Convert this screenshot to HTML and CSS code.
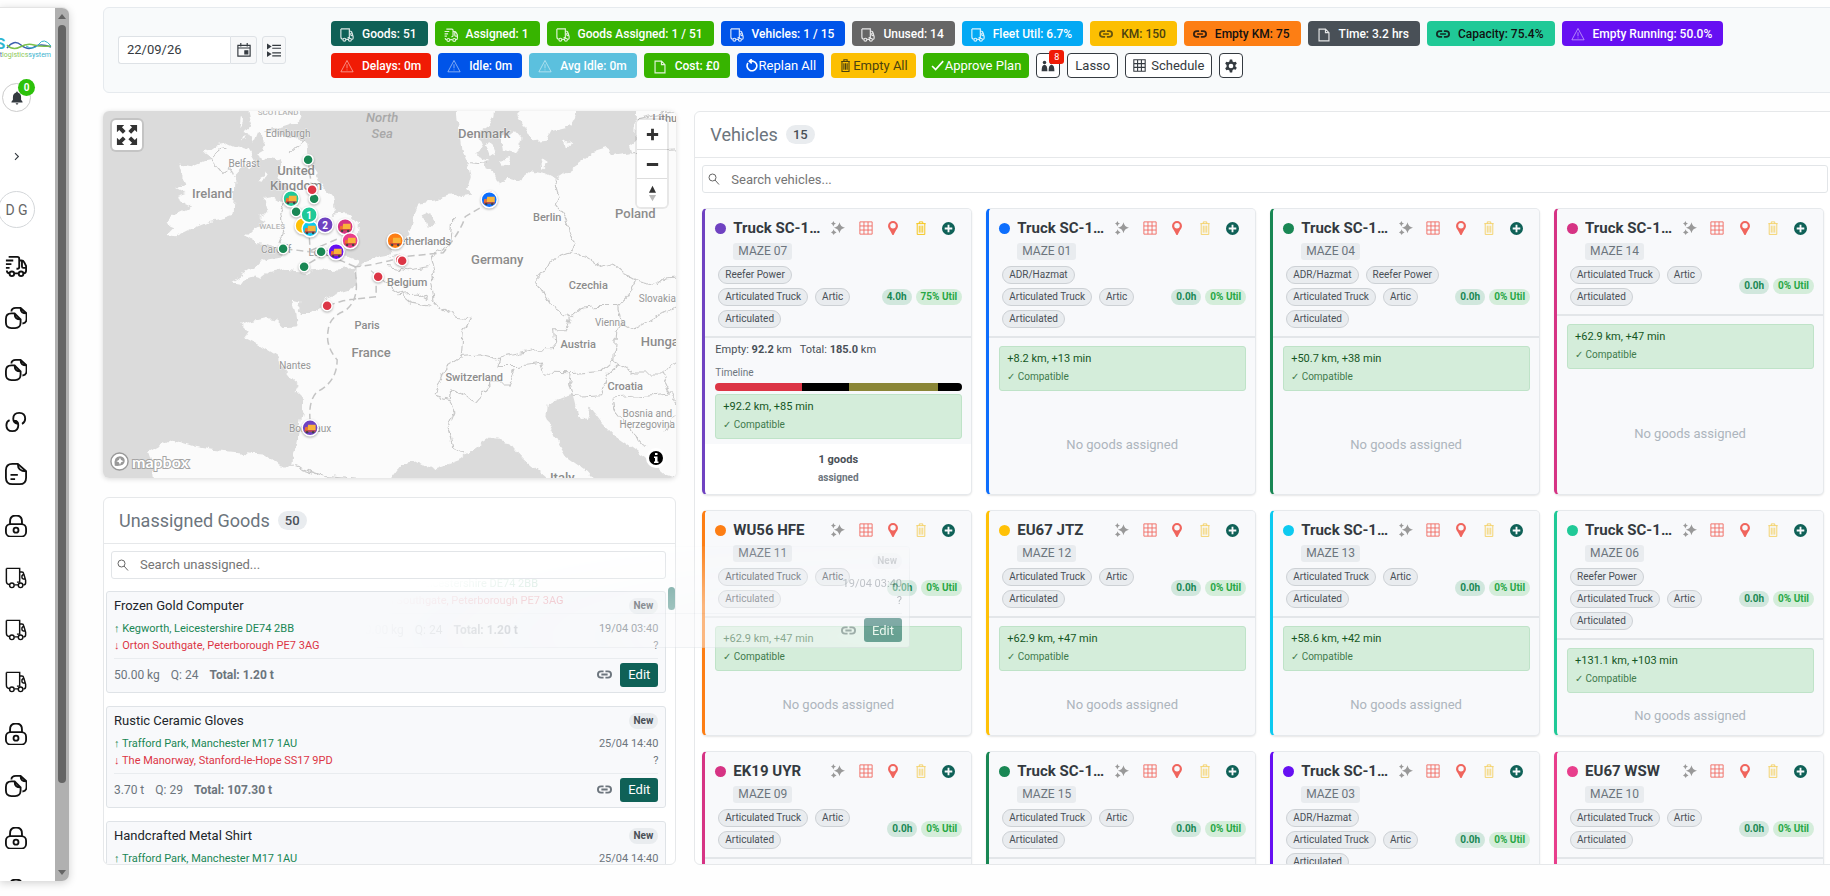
FILE: index.html
```html
<!DOCTYPE html>
<html lang="en">
<head>
<meta charset="utf-8">
<title>Transport planner</title>
<link rel="stylesheet" href="styles.css">
</head>
<body>
<svg class="defs" aria-hidden="true">
  <symbol id="i-truck" viewBox="0 0 24 24"><path d="M1.500 1.500h14.500v15h-3M1.500 1.500v13.500q0 4 3 4M10.500 19.500h4M16 5.500h2.500q1.500 0 2 2l2 7v3q0 2-2.500 2M22.500 13h-2.500q-1.500 0-1.500-1.500v-2l2-2"/><circle cx="7.500" cy="20" r="2.500"/><circle cx="17" cy="20" r="2.500"/></symbol>
  <symbol id="i-fast" viewBox="0 0 24 24"><path d="M4 2h9.500q2 0 2 2v9q0 2-2 2h-1M1 6h8M1 10h6M1 14h4M2 17q0 3 3 3M10.500 20h4M15.500 6h2.500q2 0 3 2l2 4v5q0 3-2.500 3M23 14h-3q-1.500 0-1.500-1.500V6.500"/><circle cx="7.500" cy="20.500" r="2.500"/><circle cx="17.500" cy="20.500" r="2.500"/></symbol>
  <symbol id="i-docs" viewBox="0 0 24 24"><path d="M10.500 7H7Q1 7 1 13v4q0 6 6 6h4q6 0 6-6v-3.500zM10.500 7q0 6.500 6.500 6.500M7 5q0-4 5-4h5l6.500 6v6q0 4.500-4.500 5M17 1q0 6 6.500 6"/></symbol>
  <symbol id="i-note" viewBox="0 0 24 24"><path d="M14 1H8Q1 1 1 8v8q0 7 7 7h8q7 0 7-7V9zM14 1q0 8 9 8M6 13h8M6 17.500h5"/></symbol>
  <symbol id="i-lock" viewBox="0 0 24 24"><path d="M5.500 10V7q0-6.500 6.500-6.500T18.500 7v3"/><rect x="1" y="10" width="22" height="13.500" rx="5"/><circle cx="12" cy="16.500" r="2.700"/></symbol>
  <symbol id="i-loop" viewBox="0 0 24 24"><path d="M10 10.500q4.500 0 4.500 5 0 6.500-6.500 6.500t-6.500-6.500q0-4 3.500-5.500M14 14q-5-1-5-5.500Q9 2 15.500 2T22 8.500q0 4-3.500 5.500"/></symbol>
  <symbol id="i-link" viewBox="0 0 24 24"><path d="M10.500 7H6.500a5 5 0 0 0 0 10h4M13.500 7h4a5 5 0 0 1 0 10h-4M7 12h10"/></symbol>
  <symbol id="i-file" viewBox="0 0 24 24"><path d="M3.500 2h11l6 6v14h-17zM14.500 2v6h6"/></symbol>
  <symbol id="i-warn" viewBox="0 0 24 24"><path d="M12 2.500 22.500 22h-21zM12 9v7M12 18v1.500"/></symbol>
  <symbol id="i-undo" viewBox="0 0 24 24"><path d="M5.500 7.500A9 9 0 1 0 15 4H9M12.500 0 8 4l4.500 4"/></symbol>
  <symbol id="i-trash" viewBox="0 0 24 24"><path d="M4 4.500h16M9 4.500V1.500h6v3M5.500 4.500v18.500h13V4.500M9 8v12M12 8v12M15 8v12"/></symbol>
  <symbol id="i-check" viewBox="0 0 24 24"><path d="m2 13 6.500 6.500L22.500 4"/></symbol>
  <symbol id="i-grid" viewBox="0 0 24 24"><path d="M1.500 1.500h21v21h-21zM8.500 1.500v21M15.500 1.500v21M1.500 8.500h21M1.500 15.500h21"/></symbol>
  <symbol id="i-pin" viewBox="0 0 24 24"><path fill-rule="evenodd" d="M12 0a8.500 8.500 0 0 1 8.500 8.500c0 4.500-4 7-7 14.500q-1.500 2-3 0c-3-7.500-7-10-7-14.500A8.500 8.500 0 0 1 12 0zm0 3.500a4.700 4.700 0 1 0 0 9.400 4.700 4.700 0 0 0 0-9.400z"/></symbol>
  <symbol id="i-plus" viewBox="0 0 24 24"><path fill-rule="evenodd" d="M12 0a12 12 0 1 1 0 24 12 12 0 0 1 0-24zm-1.700 5v5.300H5v3.400h5.300V19h3.400v-5.300H19v-3.400h-5.300V5z"/></symbol>
  <symbol id="i-spark" viewBox="0 0 24 24"><path d="M14.500 2q1.500 8 9.500 9.500-8 1.500-9.500 9.500Q13 13 5 11.500 13 10 14.500 2zM4 0q.8 3.500 4.500 4.300Q4.800 5 4 9.500 3.200 5 0 4.300 3.200 3.500 4 0zM4.500 14q.8 4.600 5 5.500-4.200.8-5 4.500Q3.700 20.300 0 19.500q3.700-.9 4.500-5.500z"/></symbol>
  <symbol id="i-search" viewBox="0 0 24 24"><circle cx="9" cy="9" r="7"/><path d="m14 14 8 9"/></symbol>
  <symbol id="i-lorry" viewBox="0 0 12 10"><path fill="#f9b43a" d="M4 1h7.500v5.500H3z"/><path fill="#f0702c" d="M1 3.500 3.500 3v4.500H.5z"/><path fill="#c9463d" d="M.5 6.500h11V8H.5z"/><circle cx="3" cy="8.300" r="1.200" fill="#444"/><circle cx="9" cy="8.300" r="1.200" fill="#444"/></symbol>
</svg>

<aside class="sidebar">
  <div class="rail">
    <div class="logo">
      <svg class="logo-art" viewBox="0 0 52 14" fill="none"><path d="M7 9q7-9 14-3t13 2 17 0" stroke="#3c5fae" stroke-width="1.500"/><path d="M7 6q6 6 13 2t14-2 17 1" stroke="#7cc04b" stroke-width="1.500"/><path d="M26 7q8 5 13-2t12 2" stroke="#35b5cc" stroke-width="1"/></svg>
      <b class="logo-mark">S</b>
      <span class="logo-text"><i class="c-blue">ort</i><i class="c-green">logistics</i><i class="c-cyan">system</i></span>
    </div>
    <button class="bell" aria-label="Notifications"><svg viewBox="0 0 24 24"><path d="M12 1q1.500 0 1.500 1.500Q19 4 19 11v4l2.500 3.500v1h-19v-1L5 15v-4q0-7 5.500-8.500Q10.500 1 12 1zM9.500 21h5q-1 2.500-2.500 2.500T9.500 21z"/></svg><span class="bell-count">0</span></button>
    <button class="expand" aria-label="Expand"><svg class="stroke" viewBox="0 0 24 24"><path d="m8 3 9 9-9 9"/></svg></button>
    <button class="avatar">D G</button>
    <nav class="nav">
      <a href="#" aria-label="Dispatch"><svg><use href="#i-fast"/></svg></a>
      <a href="#" aria-label="Documents"><svg><use href="#i-docs"/></svg></a>
      <a href="#" aria-label="Copies"><svg><use href="#i-docs"/></svg></a>
      <a href="#" aria-label="Links"><svg><use href="#i-loop"/></svg></a>
      <a href="#" aria-label="Notes"><svg><use href="#i-note"/></svg></a>
      <a href="#" aria-label="Access"><svg><use href="#i-lock"/></svg></a>
      <a href="#" aria-label="Vehicles"><svg class="fine"><use href="#i-truck"/></svg></a>
      <a href="#" aria-label="Trailers"><svg class="fine"><use href="#i-truck"/></svg></a>
      <a href="#" aria-label="Fleet"><svg class="fine"><use href="#i-truck"/></svg></a>
      <a href="#" aria-label="Security"><svg><use href="#i-lock"/></svg></a>
      <a href="#" aria-label="Reports"><svg><use href="#i-docs"/></svg></a>
      <a href="#" aria-label="Permissions"><svg><use href="#i-lock"/></svg></a>
      <a href="#" aria-label="More"><svg><use href="#i-lock"/></svg></a>
    </nav>
  </div>
  <div class="scroll"><span class="arrow up"></span><span class="thumb"></span><span class="arrow down"></span></div>
</aside>

<main class="main">
  <header class="toolbar">
    <div class="dates">
      <div class="date-group">
        <input class="date" type="text" value="22/09/26" aria-label="Date">
        <button class="tool cal" aria-label="Open calendar"><svg class="stroke" viewBox="0 0 24 24"><path d="M1.500 4h21v18.500h-21zM1.500 8.500h21M6.500 0v6M17.500 0v6"/><path fill="currentColor" d="M13.500 13.500h5v5h-5z"/></svg></button>
      </div>
      <button class="tool" aria-label="List options"><svg class="stroke" viewBox="0 0 24 24"><path d="M9 4h15M9 9h15M9 17h15M9 22h15"/><path fill="currentColor" stroke="none" d="m0 1 8 5-8 5zM0 14l8 5-8 5z"/></svg></button>
    </div>
    <div class="stats">
      <div class="stat-row wide">
        <span class="stat teal"><svg><use href="#i-truck"/></svg>Goods: 51</span>
        <span class="stat green"><svg><use href="#i-fast"/></svg>Assigned: 1</span>
        <span class="stat green"><svg><use href="#i-truck"/></svg>Goods Assigned: 1 / 51</span>
        <span class="stat blue"><svg><use href="#i-truck"/></svg>Vehicles: 1 / 15</span>
        <span class="stat grey"><svg><use href="#i-truck"/></svg>Unused: 14</span>
        <span class="stat sky"><svg><use href="#i-truck"/></svg>Fleet Util: 6.7%</span>
        <span class="stat yellow"><svg class="bold"><use href="#i-link"/></svg>KM: 150</span>
        <span class="stat orange"><svg class="bold"><use href="#i-link"/></svg>Empty KM: 75</span>
        <span class="stat slate"><svg><use href="#i-file"/></svg>Time: 3.2 hrs</span>
        <span class="stat mint"><svg class="bold"><use href="#i-link"/></svg>Capacity: 75.4%</span>
        <span class="stat indigo"><svg class="thin"><use href="#i-warn"/></svg>Empty Running: 50.0%</span>
      </div>
      <div class="stat-row">
        <span class="stat red"><svg class="thin"><use href="#i-warn"/></svg>Delays: 0m</span>
        <span class="stat blue"><svg class="thin"><use href="#i-warn"/></svg>Idle: 0m</span>
        <span class="stat pale"><svg class="thin"><use href="#i-warn"/></svg>Avg Idle: 0m</span>
        <span class="stat green"><svg><use href="#i-file"/></svg>Cost: £0</span>
        <button class="act blue"><svg class="bold"><use href="#i-undo"/></svg>Replan All</button>
        <button class="act yellow"><svg><use href="#i-trash"/></svg>Empty All</button>
        <button class="act green"><svg class="bold"><use href="#i-check"/></svg>Approve Plan</button>
        <button class="act outline square" aria-label="Drivers"><svg class="solid" viewBox="0 0 24 24"><circle cx="6" cy="6" r="3"/><path d="M1 21q0-11 5-11t5 11z"/><circle cx="18" cy="6" r="3"/><path d="M13 21q0-11 5-11t5 11z"/></svg><span class="count">8</span></button>
        <button class="act outline">Lasso</button>
        <button class="act outline gap"><svg><use href="#i-grid"/></svg>Schedule</button>
        <button class="act outline square" aria-label="Settings"><svg class="solid" viewBox="0 0 24 24"><path fill-rule="evenodd" d="M10 1h4l.7 3.200 2.200 1.300 3.100-1 2 3.400-2.400 2.200v2.600l2.400 2.300-2 3.400-3.100-1-2.200 1.300L14 23h-4l-.7-3.300-2.200-1.300-3.100 1-2-3.400 2.400-2.300V10.100L2 7.900l2-3.400 3.100 1 2.200-1.300zM12 8a4 4 0 1 0 0 8 4 4 0 0 0 0-8z"/></svg></button>
      </div>
    </div>
  </header>

  <div class="columns">
    <div class="left">
      <section class="map" aria-label="Map">
        <svg class="map-art" viewBox="0 0 573 367" preserveAspectRatio="xMidYMid slice">
          <defs>
            <filter id="rough" x="0" y="0" width="100%" height="100%"><feTurbulence type="fractalNoise" baseFrequency=".09" numOctaves="3" seed="4" result="n"/><feDisplacementMap in="SourceGraphic" in2="n" scale="9" xChannelSelector="R" yChannelSelector="G"/></filter>
          </defs>
          <g filter="url(#rough)">
          <rect x="-20" y="-20" width="620" height="410" fill="#dbdbdb"/>
          <g transform="translate(-3 -11) scale(.3762 .3333)">
            <g class="land">
              <path d="M388 0 400 60 380 100 400 105 408 135 420 100 430 90 432 130 418 165 440 180 475 185 490 180 480 200 470 225 480 250 490 262 500 280 495 300 478 308 455 293 428 298 440 310 445 330 430 350 420 355 440 365 410 385 385 412 410 430 440 432 465 445 480 455 500 448 485 470 450 475 430 480 415 500 385 520 350 545 372 550 385 540 410 530 430 537 450 520 490 510 540 517 590 512 640 508 680 500 692 484 665 472 645 470 640 455 670 440 685 410 688 370 665 345 630 342 612 347 627 330 618 290 592 265 580 230 562 200 555 180 550 130 520 105 495 110 460 102 440 92 480 85 520 70 535 45 530 0z"/>
              <path d="M340 130 360 140 395 150 415 190 400 205 385 200 360 230 358 290 355 345 330 355 290 365 245 385 200 410 178 405 195 385 175 375 185 350 240 320 210 305 205 290 230 280 205 265 230 250 215 215 210 195 245 200 275 185 300 180 275 160 300 140z"/>
              <path d="M425 238 436 214 443 220 432 240zM370 90 380 60 374 50zM375 125 395 108 392 120z"/>
              <path d="M945 0 950 60 955 100 960 150 975 190 985 230 975 270 992 288 960 292 940 280 915 285 895 303 850 312 835 350 820 400 800 430 775 450 770 465 740 470 700 490 682 500 680 540 670 570 640 580 595 600 590 620 560 640 530 640 535 605 512 600 522 640 525 680 490 682 470 660 440 655 400 665 375 674 395 695 383 715 420 735 470 770 480 800 500 830 530 860 522 880 545 900 535 950 525 1010 515 1060 510 1100 480 1100 440 1065 390 1060 300 1050 250 1040 195 1020 160 1040 128 1060 140 1100 150 1200H700L770 1140 800 1095 840 1085 880 1110 960 1075 1000 1040 1030 1018 1090 1030 1120 1070 1150 1100 1200 1150 1220 1200H1360L1290 1110 1240 1070 1210 1010 1186 950 1190 915 1225 895 1255 885 1260 905 1268 945 1290 965 1300 920 1330 965 1370 1010 1420 1050 1470 1090 1500 1120 1600 1160V0H1425L1422 120 1405 135 1412 160 1370 167 1345 148 1310 160 1260 200 1210 237 1180 220 1145 212 1110 245 1080 240 1060 252 1045 215 1020 200 1028 180 1000 165 1018 130 1005 100 1030 80 1045 50 1050 0z"/>
              <path d="M1020 140 1045 130 1055 160 1030 170zM1065 110 1100 95 1120 120 1105 160 1070 150zM1060 180 1095 175 1090 195 1070 200zM1112 0 1115 50 1130 80 1150 125 1185 120 1200 90 1255 75 1275 0zM1170 175 1190 190 1175 205zM1235 120 1255 135 1240 140z"/>
            </g>
            <path class="inlet" d="M860 350 880 340 890 370 868 385zM770 470 800 462 790 475zM500 450 470 458 500 462z"/>
            <g class="borders">
              <path d="M340 145 322 150 295 180 325 220 345 200 355 230M498 300 480 340 488 400 478 430M545 120 505 160"/>
              <path d="M978 180 1028 185M1205 237 1220 290 1215 320 1240 360 1250 400 1262 430 1245 460"/>
              <path d="M1245 460 1210 475 1155 540 1175 580 1200 620 1250 655 1280 625 1320 620 1375 620 1400 590 1425 540 1385 515 1360 490 1330 500 1290 470zM1425 540 1480 555 1500 535 1560 530M1375 620 1385 670 1420 690 1500 640 1531 620"/>
              <path d="M1250 655 1240 690 1205 690 1210 750 1160 750 1060 775 1055 800 1110 800 1170 790 1180 820 1250 822 1330 815 1365 780 1370 700 1385 670"/>
              <path d="M940 350 935 430 880 470 890 520 875 540 885 600 900 620 950 650 985 655 965 700 960 770 1010 765 1060 780"/>
              <path d="M765 500 820 510 875 500M720 510 760 550 800 580 830 610 880 620M790 585 840 580 870 600"/>
              <path d="M960 770 920 800 890 885 930 900 935 870 1000 905 1040 850 1085 850 1100 810M930 905 940 940 925 980 940 1040 970 1060M510 1095 600 1130 700 1140"/>
              <path d="M1250 822 1245 850 1255 890 1330 885 1340 850 1350 820 1380 790M1360 780 1420 820 1490 820 1531 790M1490 820 1515 880 1360 895 1365 930 1400 980 1450 1040M1515 880 1540 930 1500 1000"/>
              <path d="M1410 160 1531 150M1425 60 1531 33"/>
            </g>
          </g>
          </g>
          <g class="routes">
            <path d="M207 310Q205 290 214 281 234 271 234 249 222 235 225 220 226 206 242 200 255 190 253 170L252 156Q270 155 300 146L340 142Q358 120 362 106L384 93M252 156 222 143 200 156M222 143 182 138M253 188 240 190 224 195M255 188 273 186V168M205 105 207 140M205 50 209 80M207 140 235 128"/>
          </g>
          <g class="places">
            <text class="xs" x="175" y="4">SCOTLAND</text><text class="xs" x="169" y="118">WALES</text>
            <text class="s" x="185" y="26">Edinburgh</text><text class="s" x="141" y="56">Belfast</text>
            <text class="l" x="193" y="64">United</text><text class="l" x="193" y="79">Kingdom</text><text class="l" x="109" y="87">Ireland</text>
            <text class="m it" x="279" y="11">North</text><text class="m it" x="279" y="27">Sea</text>
            <text class="l" x="381" y="27">Denmark</text><text class="m" x="444" y="110">Berlin</text><text class="l" x="532" y="107">Poland</text>
            <text class="l" x="394" y="153">Germany</text><text class="m" x="318" y="134">Netherlands</text><text class="m" x="304" y="175">Belgium</text>
            <text class="m" x="485" y="178">Czechia</text><text class="s" x="554" y="191">Slovakia</text><text class="s" x="507" y="215">Vienna</text>
            <text class="m" x="264" y="218">Paris</text><text class="l" x="268" y="246">France</text><text class="m" x="475" y="237">Austria</text>
            <text class="l" x="562" y="235">Hungary</text><text class="m" x="371" y="270">Switzerland</text><text class="m" x="522" y="279">Croatia</text>
            <text class="s" x="544" y="306">Bosnia and</text><text class="s" x="544" y="317">Herzegovina</text><text class="l" x="459" y="371">Italy</text>
            <text class="m" x="572" y="11">Lithuania</text><text class="s" x="192" y="258">Nantes</text><text class="s" x="207" y="321">Bordeaux</text>
            <text class="s" x="173" y="142">Cardiff</text><text class="s" x="222" y="145">London</text>
          </g>
          <g class="dots">
            <g fill="#198754"><circle cx="205" cy="49" r="5"/><circle cx="211" cy="88" r="5"/><circle cx="193" cy="101" r="5"/><circle cx="180" cy="138" r="5"/><circle cx="218" cy="141" r="5"/><circle cx="201" cy="156" r="5"/></g>
            <g fill="#dc3545"><circle cx="209" cy="79" r="5"/><circle cx="297" cy="149" r="5"/><circle cx="299" cy="150" r="5"/><circle cx="275" cy="166" r="5"/><circle cx="224" cy="195" r="5"/><circle cx="387" cy="85" r="5"/></g>
            <circle cx="188" cy="88" r="8" fill="#20c997"/><circle cx="200" cy="115" r="8" fill="#ffc107"/><circle cx="207" cy="118" r="8" fill="#0dcaf0"/><circle cx="206" cy="104" r="8" fill="#20c997"/><circle cx="222" cy="114" r="8" fill="#6f42c1"/><circle cx="242" cy="116" r="8" fill="#d63384"/><circle cx="247" cy="130" r="8" fill="#e83e8c"/><circle cx="233" cy="141" r="8" fill="#6610f2"/><circle cx="292" cy="130" r="8" fill="#fd7e14"/><circle cx="386" cy="89" r="8" fill="#0d6efd"/><circle cx="207" cy="317" r="8" fill="#6f42c1"/>
          </g>
          <use href="#i-lorry" x="182" y="84" width="12" height="10"/><use href="#i-lorry" x="201" y="114" width="12" height="10"/><use href="#i-lorry" x="236" y="112" width="12" height="10"/><use href="#i-lorry" x="241" y="126" width="12" height="10"/><use href="#i-lorry" x="227" y="137" width="12" height="10"/><use href="#i-lorry" x="286" y="126" width="12" height="10"/><use href="#i-lorry" x="380" y="85" width="12" height="10"/><use href="#i-lorry" x="201" y="313" width="12" height="10"/>
          <g class="nums"><text x="206" y="108">1</text><text x="222" y="118">2</text></g>
        </svg>
        <button class="map-btn full" aria-label="Full screen"><svg viewBox="0 0 24 24"><path d="M1 1h8L6.500 3.500l4 4-3 3-4-4L1 9zM23 1v8l-2.500-2.500-4 4-3-3 4-4L15 1zM1 23v-8l2.500 2.500 4-4 3 3-4 4L9 23zM23 23h-8l2.500-2.500-4-4 3-3 4 4L23 15z"/></svg></button>
        <div class="map-nav">
          <button class="map-btn" aria-label="Zoom in"><svg viewBox="0 0 24 24"><path d="M10 4h4v6h6v4h-6v6h-4v-6H4v-4h6z"/></svg></button>
          <button class="map-btn" aria-label="Zoom out"><svg viewBox="0 0 24 24"><path d="M4 10h16v4H4z"/></svg></button>
          <button class="map-btn" aria-label="Reset north"><svg viewBox="0 0 24 24"><path d="m12 1 5 10H7z"/><path fill="#bbb" d="m12 23 5-9H7z"/></svg></button>
        </div>
        <a class="mapbox" href="#"><svg viewBox="0 0 20 20"><circle cx="10" cy="10" r="9" fill="#fff" stroke="#999" stroke-width="1.500"/><path fill="#999" d="M5 14.500Q3.500 5 10.500 4.500q5 .500 5 5Q15 15.500 5 14.500z"/><path fill="#fff" d="m10.500 6 1.200 2.500 2.500 1.200-2.500 1.200-1.200 2.500-1.200-2.500-2.500-1.200 2.500-1.200z"/></svg><span>mapbox</span></a>
        <button class="info" aria-label="Attribution"><svg viewBox="0 0 20 20"><circle cx="10" cy="10" r="10" fill="#fff"/><circle cx="10" cy="10" r="7"/><path fill="#fff" d="M9 5h2.500v2H9zM8 8.500h3.500v5h1V15H8v-1.500h1V10H8z"/></svg></button>
      </section>

      <section class="panel goods">
        <h2 class="panel-title">Unassigned Goods <span class="pill">50</span></h2>
        <label class="search"><svg><use href="#i-search"/></svg><input type="text" placeholder="Search unassigned..." aria-label="Search unassigned"></label>
        <div class="goods-list">
          <article class="good">
            <div class="good-head"><h3>Frozen Gold Computer</h3><span class="new">New</span></div>
            <div class="good-line"><span class="from">↑ Kegworth, Leicestershire DE74 2BB</span><span>19/04 03:40</span></div>
            <div class="good-line"><span class="to">↓ Orton Southgate, Peterborough PE7 3AG</span><span>?</span></div>
            <div class="good-foot"><span>50.00 kg</span><span>Q: 24</span><b>Total: 1.20 t</b><svg class="bold"><use href="#i-link"/></svg><button class="edit">Edit</button></div>
          </article>
          <article class="good">
            <div class="good-head"><h3>Rustic Ceramic Gloves</h3><span class="new">New</span></div>
            <div class="good-line"><span class="from">↑ Trafford Park, Manchester M17 1AU</span><span>25/04 14:40</span></div>
            <div class="good-line"><span class="to">↓ The Manorway, Stanford-le-Hope SS17 9PD</span><span>?</span></div>
            <div class="good-foot"><span>3.70 t</span><span>Q: 29</span><b>Total: 107.30 t</b><svg class="bold"><use href="#i-link"/></svg><button class="edit">Edit</button></div>
          </article>
          <article class="good">
            <div class="good-head"><h3>Handcrafted Metal Shirt</h3><span class="new">New</span></div>
            <div class="good-line"><span class="from">↑ Trafford Park, Manchester M17 1AU</span><span>25/04 14:40</span></div>
          </article>
        </div>
        <span class="list-thumb"></span>
      </section>
    </div>

    <section class="panel vehicles">
      <h2 class="panel-title">Vehicles <span class="pill">15</span></h2>
      <label class="search"><svg><use href="#i-search"/></svg><input type="text" placeholder="Search vehicles..." aria-label="Search vehicles"></label>
      <div class="cards" id="cards"></div>
    </section>
  </div>
</main>

<article class="good drag" aria-hidden="true">
  <div class="good-head"><h3>Frozen Gold Computer</h3><span class="new">New</span></div>
  <div class="good-line"><span class="from">↑ Kegworth, Leicestershire DE74 2BB</span><span>19/04 03:40</span></div>
  <div class="good-line"><span class="to">↓ Orton Southgate, Peterborough PE7 3AG</span><span>?</span></div>
  <div class="good-foot"><span>50.00 kg</span><span>Q: 24</span><b>Total: 1.20 t</b><svg class="bold"><use href="#i-link"/></svg><button class="edit" tabindex="-1">Edit</button></div>
</article>
<script src="cards.js"></script>
</body>
</html>
```
FILE: cards.js
```js
const vehicles = [
  { tone: "purple", name: "Truck SC-1042 Volvo", code: "MAZE 07", extra: ["Reefer Power"], hours: "4.0h", util: "75% Util", fit: "+92.2 km, +85 min", goods: 1 },
  { tone: "c-bl", name: "Truck SC-1043 Volvo", code: "MAZE 01", extra: ["ADR/Hazmat"], fit: "+8.2 km, +13 min" },
  { tone: "c-gr", name: "Truck SC-1044 Volvo", code: "MAZE 04", extra: ["ADR/Hazmat", "Reefer Power"], fit: "+50.7 km, +38 min" },
  { tone: "c-pk", name: "Truck SC-1045 Volvo", code: "MAZE 14", extra: [], fit: "+62.9 km, +47 min" },
  { tone: "c-or", name: "WU56 HFE", code: "MAZE 11", extra: [], fit: "+62.9 km, +47 min" },
  { tone: "c-ye", name: "EU67 JTZ", code: "MAZE 12", extra: [], fit: "+62.9 km, +47 min" },
  { tone: "c-cy", name: "Truck SC-1046 Volvo", code: "MAZE 13", extra: [], fit: "+58.6 km, +42 min" },
  { tone: "c-mi", name: "Truck SC-1047 Volvo", code: "MAZE 06", extra: ["Reefer Power"], fit: "+131.1 km, +103 min" },
  { tone: "c-pk", name: "EK19 UYR", code: "MAZE 09", extra: [] },
  { tone: "c-gr", name: "Truck SC-1048 Volvo", code: "MAZE 15", extra: [] },
  { tone: "c-in", name: "Truck SC-1049 Volvo", code: "MAZE 03", extra: ["ADR/Hazmat"] },
  { tone: "c-ro", name: "EU67 WSW", code: "MAZE 10", extra: [] }
];

const tools = [["Optimise", "spark"], ["Schedule", "grid"], ["Locate", "pin"], ["Empty", "trash"], ["Add", "plus"]]
  .map(([label, icon]) => `<button aria-label="${label}"><svg><use href="#i-${icon}"/></svg></button>`).join("");

const fitBox = v => v.fit ? `<div class="fit"><strong>${v.fit}</strong><span>✓ Compatible</span></div>` : "";

const body = v => {
  if (v.goods) {
    return `<div class="summary">
      <p class="km"><span>Empty: <b>92.2</b> km</span><span>Total: <b>185.0</b> km</span></p>
      <p class="tl-label">Timeline</p>
      <div class="timeline"><i class="tl-a"></i><i class="tl-b"></i><i class="tl-c"></i><i class="tl-d"></i></div>
      ${fitBox(v)}
    </div>
    <div class="assigned"><b>${v.goods} goods</b><b class="sub">assigned</b></div>`;
  }
  return v.fit ? `${fitBox(v)}<p class="none">No goods assigned</p>` : "";
};

document.getElementById("cards").innerHTML = vehicles.map(v => `<article class="card ${v.tone}">
  <div class="card-head">
    <div class="title"><i class="dot"></i><h3>${v.name}</h3><div class="tools${v.goods ? " full-trash" : ""}">${tools}</div></div>
    <span class="code">${v.code}</span>
    <div class="meta">
      <div class="tags">${[...v.extra, "Articulated Truck", "Artic", "Articulated"].map(t => `<span>${t}</span>`).join("")}</div>
      <div class="util"><b>${v.hours || "0.0h"}</b><b>${v.util || "0% Util"}</b></div>
    </div>
  </div>
  ${body(v)}
</article>`).join("");
```
FILE: styles.css
```css
* { box-sizing: border-box; }
body {
  margin: 0;
  height: 100vh;
  display: flex;
  overflow: hidden;
  background: #fefefe;
  color: #343a40;
  font-family: Roboto, "Liberation Sans", sans-serif;
  font-size: 13px;
}
h2, h3, p { margin: 0; font-weight: 400; }
button, input { font: inherit; color: inherit; }
button { cursor: pointer; padding: 0; background: none; border: 0; }
a { color: inherit; text-decoration: none; }
i { font-style: normal; }
svg { display: block; flex: none; fill: none; stroke: currentColor; stroke-width: 2; }
.defs { position: absolute; width: 0; height: 0; }
svg.bold { stroke-width: 3; }
svg.thin { stroke-width: 1; }
svg.fine { stroke-width: 1.6; }
svg.solid { fill: currentColor; stroke: none; }

/* Sidebar */
.sidebar {
  flex: none;
  width: 69px;
  margin: 7px 0 15px;
  display: flex;
  border-top: 1px solid #e4e4e4;
  border-radius: 0 7px 7px 0;
  background: #fff;
  box-shadow: 0 2px 8px rgba(0, 0, 0, .18);
  overflow: hidden;
}
.rail { flex: 1; display: flex; flex-direction: column; overflow: hidden; }
.logo { flex: none; height: 20px; margin-top: 31px; position: relative; }
.logo-art { width: 52px; height: 14px; }
.logo-mark { position: absolute; left: -4px; top: -4px; color: #2bb5d0; font-size: 15px; line-height: 18px; }
.logo-text { position: absolute; right: 4px; bottom: 0; font: 7px/8px Roboto, sans-serif; white-space: nowrap; }
.c-blue { color: #3f6fb5; }
.c-green { color: #8cc957; }
.c-cyan { color: #3bb3cf; }
.bell {
  position: relative;
  flex: none;
  width: 29px;
  height: 29px;
  margin: 24px 0 0 2px;
  display: grid;
  place-items: center;
  border: 1px solid #ccc;
  border-radius: 50%;
  color: #343a40;
}
.bell svg { width: 14px; height: 14px; fill: currentColor; stroke: none; }
.bell-count {
  position: absolute;
  top: -5px;
  right: -5px;
  width: 17px;
  height: 17px;
  border-radius: 50%;
  background: #2dc10b;
  color: #fff;
  font-size: 10px;
  font-weight: 700;
  line-height: 17px;
}
.expand { flex: none; height: 20px; margin: 34px 0 0 10px; width: 12px; display: grid; place-items: center; }
.expand svg { width: 9px; height: 9px; stroke-width: 3; }
.avatar {
  flex: none;
  width: 37px;
  height: 37px;
  margin: 25px 0 12px -2px;
  border: 1px solid #d3d6d9;
  border-radius: 50%;
  color: #666;
  font-size: 14px;
}
.nav { flex: none; padding-left: 5px; color: #111; }
.nav a { height: 52px; display: flex; align-items: center; }
.nav svg { width: 22px; height: 22px; }
.scroll {
  width: 14px;
  display: flex;
  flex-direction: column;
  align-items: center;
  gap: 6px;
  padding: 6px 0;
  background: #b0b0b0;
}
.thumb { flex: 0 0 88%; width: 8px; border-radius: 4px; background: #646464; }
.arrow { border: 4px solid transparent; border-top: 0; border-bottom: 5px solid #646464; }
.arrow.down { margin-top: auto; border-bottom: 0; border-top: 5px solid #646464; }

/* Main */
.main {
  flex: 1;
  min-width: 0;
  margin: 7px -11px 31px 34px;
  display: flex;
  flex-direction: column;
  gap: 18px;
}
.toolbar {
  display: flex;
  align-items: center;
  gap: 45px;
  padding: 13px 14px 14px;
  border: 1px solid #e6eaee;
  border-radius: 6px;
  background: #f8fafb;
}
.dates, .date-group { display: flex; }
.dates { gap: 5px; }
.date {
  width: 112px;
  height: 28px;
  padding: 0 8px;
  border: 1px solid #dee2e6;
  border-right: 0;
  border-radius: 3px 0 0 3px;
  background: #fff;
}
.tool {
  width: 24px;
  height: 28px;
  display: grid;
  place-items: center;
  border: 1px solid #dee2e6;
  border-radius: 3px;
  background: #f7f8f9;
}
.tool.cal { width: 27px; border-radius: 0 3px 3px 0; }
.tool svg { width: 14px; height: 14px; }
.stats { display: flex; flex-direction: column; gap: 7px; }
.stat-row { display: flex; gap: 7px; white-space: nowrap; }
.stat, .act {
  height: 25px;
  display: flex;
  align-items: center;
  border-radius: 4px;
}
.stat { gap: 8px; padding: 0 10px 0 9px; font-size: 12px; font-weight: 500; }
.wide .stat { padding: 0 11px 0 9px; }
.stat svg { width: 14px; height: 14px; stroke-width: 2; margin-top: 2px; opacity: .85; }
.stat svg.bold { stroke-width: 3; margin-top: 0; }
.stat svg.thin { stroke-width: 1; margin-top: 0; }
.act { gap: 1px; padding: 0 8px; }
.act svg { width: 13px; height: 13px; }
.act.outline { border: 1px solid #343a40; padding: 0 7px; background: #fff; }
.act.gap { gap: 5px; }
.act.square { width: 24px; padding: 0; justify-content: center; position: relative; }
.act.square svg { width: 14px; height: 14px; }
.count {
  position: absolute;
  top: -4px;
  right: -5px;
  width: 15px;
  height: 14px;
  border-radius: 3px;
  background: #f01b05;
  color: #fff;
  font-size: 9px;
  line-height: 14px;
}
.teal { background: #0f6157; color: #fff; }
.green { background: #37b400; color: #fff; }
.blue { background: #0054e9; color: #fff; }
.grey { background: #666; color: #fff; }
.sky { background: #03a9f4; color: #fff; }
.yellow { background: #fcbf02; color: #4b4210; }
.orange { background: #fd7e14; color: #111; }
.slate { background: #495057; color: #fff; }
.mint { background: #20c997; color: #111; }
.indigo { background: #6610f2; color: #fff; }
.red { background: #f01b05; color: #fff; }
.pale { background: #5bc0de; color: #fff; }

.columns { flex: 1; min-height: 0; display: grid; grid-template-columns: 1fr 2fr; gap: 18px; }
.left { min-width: 0; min-height: 0; display: flex; flex-direction: column; gap: 19px; }

/* Map */
.map {
  flex: 1 1 0;
  min-height: 0;
  position: relative;
  border-radius: 6px;
  overflow: hidden;
  box-shadow: 0 1px 5px rgba(0, 0, 0, .15);
}
.map-art { position: absolute; inset: 0; width: 100%; height: 100%; stroke: none; }
.land { fill: #fbfbfb; }
.inlet { fill: #dbdbdb; }
.borders { fill: none; stroke: #c6c6c6; stroke-width: 3; }
.routes { fill: none; stroke: #c4c4c4; stroke-width: 1.5; stroke-dasharray: 7 4; }
.places { fill: #8c8c8c; font-weight: 500; text-anchor: middle; stroke: #fff; stroke-width: 1; stroke-opacity: .6; paint-order: stroke; }
.places .xs { font-size: 8px; fill: #b5b5b5; }
.places .s { font-size: 10px; font-weight: 400; fill: #969696; }
.places .m { font-size: 11px; }
.places .l { font-size: 13px; }
.places .it { font-style: italic; fill: #a8a8a8; stroke: none; font-size: 13px; }
.dots { stroke: #fff; stroke-width: 1.5; filter: drop-shadow(0 1px 1px rgba(0, 0, 0, .3)); }
.nums { fill: #fff; font-size: 10px; font-weight: 700; text-anchor: middle; }
.map-btn { width: 30px; height: 29px; display: grid; place-items: center; background: #fff; }
.map-btn svg { width: 17px; height: 17px; fill: #333; stroke: none; }
.map-btn.full { position: absolute; left: 9px; top: 9px; width: 30px; height: 30px; border-radius: 4px; box-shadow: 0 0 0 2px rgba(0, 0, 0, .1); }
.map-btn.full svg { width: 22px; height: 22px; }
.map-nav { position: absolute; top: 9px; right: 9px; border-radius: 4px; overflow: hidden; box-shadow: 0 0 0 2px rgba(0, 0, 0, .08); }
.map-nav .map-btn + .map-btn { border-top: 1px solid #ddd; }
.mapbox { position: absolute; left: 7px; bottom: 6px; display: flex; align-items: center; gap: 3px; }
.mapbox svg { width: 19px; height: 19px; stroke: none; }
.mapbox span { color: #fff; font: 700 16px/20px Lato, sans-serif; -webkit-text-stroke: 2px #a5a5a5; paint-order: stroke; }
.info { position: absolute; right: 10px; bottom: 10px; }
.info svg { width: 20px; height: 20px; fill: #000; stroke: none; }

/* Panels */
.panel {
  min-width: 0;
  min-height: 0;
  position: relative;
  display: flex;
  flex-direction: column;
  border: 1px solid #e6e8ea;
  border-radius: 6px;
  background: #fff;
  overflow: hidden;
}
.panel-title {
  flex: none;
  height: 46px;
  display: flex;
  align-items: center;
  gap: 8px;
  padding: 0 15px;
  border-bottom: 1px solid #e6e8ea;
  color: #6c757d;
  font-size: 18px;
}
.pill {
  padding: 0 7px;
  border-radius: 10px;
  background: #e9ecef;
  color: #495057;
  font-size: 13px;
  font-weight: 500;
  line-height: 19px;
}
.search {
  flex: none;
  height: 28px;
  margin: 7px 9px 0 7px;
  display: flex;
  align-items: center;
  gap: 11px;
  padding-left: 5px;
  border: 1px solid #e2e5e8;
  border-radius: 3px;
  color: #666;
}
.vehicles .search { margin-right: 12px; }
.search svg { width: 12px; height: 12px; }
.search input { flex: 1; border: 0; outline: 0; background: none; padding: 0; }
.search input::placeholder { color: #757575; opacity: 1; }

.goods { flex: 1 1 0; }
.goods-list { flex: 1; min-height: 0; overflow: hidden; margin-top: 12px; padding: 0 9px 0 2px; display: flex; flex-direction: column; gap: 13px; }
.list-thumb { position: absolute; right: 0; top: 89px; width: 7px; height: 23px; border-radius: 4px; background: #5d9a92; }
.good {
  flex: none;
  padding: 4px 7px 5px;
  border: 1px solid #dfe3e7;
  border-radius: 3px;
  background: #f8f9fb;
  color: #6c757d;
}
.good-head { display: flex; justify-content: space-between; align-items: center; margin-bottom: 4px; }
.good-head h3 { color: #212529; font-size: 13px; line-height: 20px; }
.new { padding: 0 5px; border-radius: 8px; background: #e9ecef; color: #495057; font-size: 10px; font-weight: 700; line-height: 16px; }
.good-line { display: flex; justify-content: space-between; font-size: 11px; line-height: 17px; }
.from { color: #198754; }
.to { color: #dc3545; }
.good-foot { display: flex; align-items: center; gap: 11px; margin-top: 4px; padding-top: 4px; border-top: 1px solid #e9ecef; font-size: 12px; }
.good-foot b { font-weight: 700; }
.good-foot svg { width: 15px; height: 15px; margin-left: auto; }
.edit { height: 24px; padding: 0 8px; margin-left: -3px; border-radius: 3px; background: #0f6157; color: #fff; font-size: 13px; }

.drag {
  position: absolute;
  left: 350px;
  top: 546px;
  width: 560px;
  pointer-events: none;
  -webkit-mask-image: radial-gradient(600px 120px at 540px 90px, rgba(0, 0, 0, .55), rgba(0, 0, 0, .45) 40%, rgba(0, 0, 0, .2) 65%, transparent 88%);
  mask-image: radial-gradient(600px 120px at 540px 90px, rgba(0, 0, 0, .55), rgba(0, 0, 0, .45) 40%, rgba(0, 0, 0, .2) 65%, transparent 88%);
}

/* Vehicle cards */
.cards {
  flex: 1;
  min-height: 0;
  overflow: hidden;
  margin-top: 15px;
  padding: 0 16px 0 7px;
  display: grid;
  grid-template-columns: repeat(4, minmax(0, 1fr));
  grid-auto-rows: max-content;
  gap: 15px 14px;
}
.card {
  --c: #6f42c1;
  display: flex;
  flex-direction: column;
  border: 1px solid #e6e9ec;
  border-left: 3px solid var(--c);
  border-radius: 5px;
  background: #f8f9fb;
  box-shadow: 0 1px 2px rgba(0, 0, 0, .1);
}
.c-bl { --c: #0d6efd; }
.c-gr { --c: #198754; }
.c-pk { --c: #d63384; }
.c-or { --c: #fd7e14; }
.c-ye { --c: #ffc107; }
.c-cy { --c: #0dcaf0; }
.c-mi { --c: #20c997; }
.c-in { --c: #6610f2; }
.c-ro { --c: #e83e8c; }
.card.purple { background: #fff; }
.card-head { padding: 4px 9px 8px 10px; border-bottom: 2px solid #e3e6e9; background: #f8f9fb; border-radius: 4px 4px 0 0; }
.title { display: flex; align-items: center; height: 30px; }
.dot { flex: none; width: 11px; height: 11px; border-radius: 50%; background: var(--c); }
.title h3 {
  flex: 1;
  min-width: 0;
  margin: 0 0 0 7px;
  overflow: hidden;
  text-overflow: ellipsis;
  white-space: nowrap;
  font-size: 15px;
  font-weight: 700;
}
.tools { flex: none; width: 138px; display: grid; grid-template-columns: repeat(5, 1fr); }
.tools button { height: 24px; display: grid; place-items: center; color: #f0655d; }
.tools svg { width: 14px; height: 14px; stroke-width: 1.5; }
.tools button:nth-child(1) { color: #999; }
.tools button:nth-child(4) { color: #f3cf5e; }
.tools.full-trash button:nth-child(4) { color: #f5c000; }
.tools button:nth-child(5) { color: #0f6157; }
.tools button:nth-child(1) svg, .tools button:nth-child(3) svg, .tools button:nth-child(5) svg { fill: currentColor; stroke: none; }
.tools button:nth-child(5) svg { width: 13px; height: 13px; }
.code { display: block; width: max-content; margin-left: 18px; padding: 0 5px; border-radius: 3px; background: #e9ecef; color: #6c757d; font-size: 12px; line-height: 17px; }
.meta { display: flex; align-items: center; justify-content: space-between; gap: 4px; margin-top: 6px; padding-left: 3px; }
.tags { flex: 1; min-width: 0; display: flex; flex-wrap: wrap; gap: 4px 7px; }
.tags span { padding: 0 6px; border: 1px solid #cdd1d5; border-radius: 9px; background: #e9ecef; color: #495057; font-size: 10px; line-height: 16px; white-space: nowrap; }
.util { flex: none; display: flex; gap: 4px; }
.util b { padding: 0 5px; border-radius: 8px; background: #d4edda; color: #28a745; font-size: 10px; line-height: 16px; }
.util b:first-child { background: #d1e7dd; color: #198754; }
.fit {
  margin: 8px 9px 4px 10px;
  padding: 4px 7px 5px;
  display: grid;
  gap: 2px;
  border: 1px solid #bfe3c8;
  border-radius: 3px;
  background: #d4edda;
  line-height: 16px;
}
.fit strong { color: #155724; font-size: 11px; font-weight: 400; }
.fit span { color: #3f7a4c; font-size: 10px; }
.summary { padding: 3px 9px 5px 10px; background: #f8f9fb; }
.summary .fit { margin: 3px 0 0; }
.km { display: flex; gap: 8px; font-size: 11px; line-height: 18px; color: #495057; }
.tl-label { margin-top: 6px; color: #6c757d; font-size: 10px; line-height: 16px; }
.timeline { display: flex; height: 8px; margin-top: 2px; border-radius: 4px; overflow: hidden; }
.tl-a { flex: 35; background: #dc3545; }
.tl-b { flex: 19; background: #000; }
.tl-c { flex: 36; background: #8a8636; }
.tl-d { flex: 10; background: #000; }
.assigned { padding: 7px 0; display: grid; text-align: center; font-size: 11px; line-height: 18px; color: #495057; }
.assigned .sub { font-size: 10px; color: #6c757d; }
.none { flex: 1; display: grid; place-items: center; padding: 9px 0; color: #adb5bd; font-size: 13px; line-height: 20px; }
```
